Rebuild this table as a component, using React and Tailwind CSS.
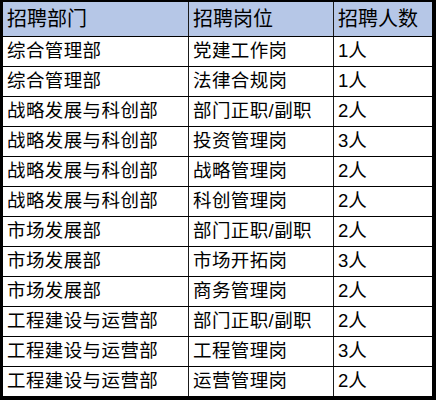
const rows = [
  ["综合管理部", "党建工作岗", "1人"],
  ["综合管理部", "法律合规岗", "1人"],
  ["战略发展与科创部", "部门正职/副职", "2人"],
  ["战略发展与科创部", "投资管理岗", "3人"],
  ["战略发展与科创部", "战略管理岗", "2人"],
  ["战略发展与科创部", "科创管理岗", "2人"],
  ["市场发展部", "部门正职/副职", "2人"],
  ["市场发展部", "市场开拓岗", "3人"],
  ["市场发展部", "商务管理岗", "2人"],
  ["工程建设与运营部", "部门正职/副职", "2人"],
  ["工程建设与运营部", "工程管理岗", "3人"],
  ["工程建设与运营部", "运营管理岗", "2人"],
];

const font = { fontFamily: '"Liberation Sans", "Noto Sans CJK SC", sans-serif' };

export default function App() {
  return (
    <div className="w-[436px] h-[400px] bg-white text-black" style={font}>
      <div className="h-full flex flex-col border-l-[3px] border-t-2 border-r-4 border-b-4 border-black">
        <div className="flex h-[35px] shrink-0 bg-[#b6c7e7] border-b border-black text-[20px] leading-none">
          <div className="w-[186px] flex items-center pl-1 border-r border-[#1a1a1a]">招聘部门</div>
          <div className="w-[145px] flex items-center pl-1 border-r border-[#1a1a1a]">招聘岗位</div>
          <div className="flex-1 flex items-center pl-1">招聘人数</div>
        </div>
        {rows.map((r, i) => (
          <div
            key={i}
            className={
              "flex shrink-0 text-[18.5px] leading-none tracking-[0.4px] " +
              (i === rows.length - 1 ? "h-[29px]" : "h-[30px] border-b border-black")
            }
          >
            <div className="w-[186px] flex items-center pl-1 border-r border-[#1a1a1a]">{r[0]}</div>
            <div className="w-[145px] flex items-center pl-1 border-r border-[#1a1a1a]">{r[1]}</div>
            <div className="flex-1 flex items-center pl-1 tracking-normal">{r[2]}</div>
          </div>
        ))}
      </div>
    </div>
  );
}
